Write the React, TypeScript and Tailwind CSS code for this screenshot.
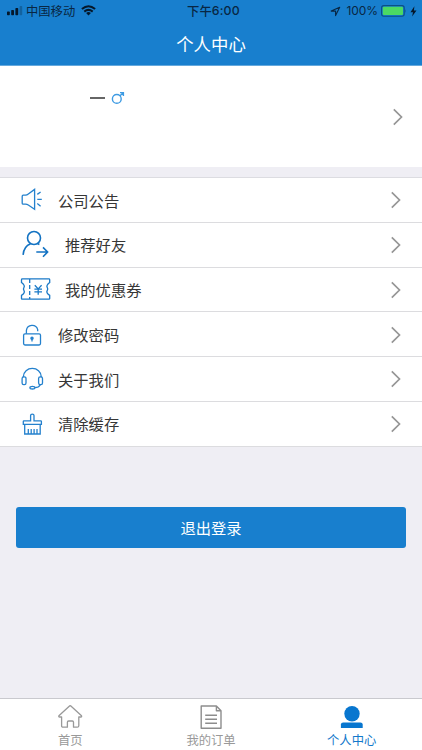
import type { ReactNode } from "react";

function Chevron() {
  return (
    <svg width="12" height="20" viewBox="0 0 12 20" fill="none" stroke="#969696" strokeWidth="1.7" className="shrink-0">
      <path d="M1.8 2.3 9.5 10 1.8 17.7" />
    </svg>
  );
}

function StatusBar() {
  return (
    <div className="grid h-[22px] grid-cols-[1fr_auto_1fr] items-center text-[12.3px] leading-none text-[#082744]">
      <div className="flex items-center pl-[7px]">
        <svg width="17" height="10" viewBox="0 0 17 10" fill="#05182b">
          <rect x="0" y="5.5" width="2.8" height="3.7" rx=".7" />
          <rect x="4.2" y="4" width="2.8" height="5.2" rx=".7" />
          <rect x="8.4" y="2" width="2.8" height="7.2" rx=".7" />
          <rect x="12.6" y="0" width="2.6" height="9.2" rx=".7" opacity=".28" />
        </svg>
        <span className="ml-[2px]">中国移动</span>
        <svg width="15" height="11" viewBox="0 0 15 11" fill="none" stroke="#05182b" strokeWidth="2" className="ml-[6px]">
          <path d="M.9 4.1Q7.5-1.7 14.1 4.1M3.3 6.6Q7.5 3.2 11.7 6.6" />
          <path d="M5.1 8Q7.5 6.2 9.9 8L7.5 10.6Z" fill="#05182b" stroke="none" />
        </svg>
      </div>
      <div className="flex items-center pl-[5px] font-medium">
        <span>下午</span>
        <span className="font-['Inter'] text-[12.3px] tracking-[0.2px]">6:00</span>
      </div>
      <div className="flex items-center justify-end pr-[5px]">
        <svg width="11" height="11" viewBox="0 0 11 11" fill="none" stroke="#082744" strokeWidth="1.1" strokeLinejoin="round">
          <path d="M9.7 1.2 1.2 5.1H5.6V9.6Z" />
        </svg>
        <span className="ml-[6px] font-['Inter'] text-[12px] tracking-[-0.1px]">100%</span>
        <svg width="26" height="12" viewBox="0 0 26 12" className="ml-[3px]">
          <rect x=".6" y=".6" width="22.6" height="10.6" rx="2.2" fill="none" stroke="#0b4f86" strokeWidth="1.1" />
          <rect x="1.8" y="1.8" width="20.2" height="8.2" rx="1" fill="#4bd964" />
          <path d="M24.3 4V8Q25.5 6 24.3 4Z" fill="#0b4f86" />
        </svg>
        <svg width="7" height="11" viewBox="0 0 7 11" fill="#05182b" className="ml-[3px]">
          <path d="M4.4.3.5 6.2H3L2.1 10.6 6.5 4.6H3.9Z" />
        </svg>
      </div>
    </div>
  );
}

const speaker = (
  <>
    <path d="M2.2 18.2Q2.2 17.2 3.2 17.2H5.5Q7 17 8.3 16L14.6 11.4V31.2L8.3 27Q7 26.2 5.5 26.2H3.2Q2.2 26.2 2.2 25.2Z" />
    <path d="M17.3 16.4 20.6 14M17.3 21.4H21.8M17.3 25.6 20.6 28.2" />
  </>
);

const friend = (
  <>
    <circle cx="14" cy="15" r="6.5" />
    <path d="M3.1 31.9C3.5 26.5 6 22.6 10.6 20.8M17.4 20.6 19.4 21.5M16.3 29H27.5M23 24.4 27.6 29 23 33.8" />
  </>
);

const coupon = (
  <>
    <path d="M2.3 10.9H28.9Q29.7 10.9 29.7 11.7V14.6C26.5 17 26.5 18.5 27.3 19.7Q28.2 21 27.3 22.3C26.5 23.5 26.5 25.2 29.7 27.4V30.4Q29.7 31.2 28.9 31.2H2.3Q1.5 31.2 1.5 30.4V27.4C4.7 25.2 4.7 23.5 3.9 22.3Q3 21 3.9 19.7C4.7 18.5 4.7 17 1.5 14.6V11.7Q1.5 10.9 2.3 10.9Z" />
    <path d="M9.7 11V31" strokeDasharray="4 2" />
    <path d="M14.8 17.2 18.2 20.9 21.6 17.2M18.2 20.9V26.8M14.4 21.1H22M14.4 23.9H22" />
  </>
);

const lock = (
  <>
    <rect x="3.6" y="20.8" width="16.9" height="11.2" rx="1.4" />
    <path d="M6.4 20.8V17.4A5.8 5.8 0 0 1 17.7 16.6V18.3" />
    <path d="M12 25V28.4" />
    <circle cx="12" cy="25.2" r="1.1" fill="#2481cd" />
  </>
);

const headset = (
  <>
    <path d="M3.4 20.2V19.5C3.6 14.8 7.4 11.4 12.3 11.4S21 14.8 21.2 19.5V20.2" />
    <rect x="2.1" y="19.8" width="3.9" height="7.9" rx="1.6" />
    <rect x="18.6" y="19.8" width="3.9" height="7.9" rx="1.6" />
    <path d="M20.3 27.7Q18.7 30.6 15 30.7" />
    <ellipse cx="12.4" cy="30.7" rx="2.5" ry="1.3" />
  </>
);

const brush = (
  <>
    <path d="M10.6 18.8V13.5Q10.6 12.2 12.3 12.2T14 13.5V18.8H20.8Q21.4 18.8 21.4 19.4V22.3H3.3V19.4Q3.3 18.8 3.9 18.8ZM4.7 22.3V32H20.2V22.3" />
    <path d="M8.3 27V32M11.2 27V32M14.1 27V32M17 27V32" />
  </>
);

interface MenuItem {
  label: string;
  icon: ReactNode;
  wide?: boolean;
  stroke: string;
}

const items: MenuItem[] = [
  { label: "公司公告", icon: speaker, stroke: "#2481cd" },
  { label: "推荐好友", icon: friend, wide: true, stroke: "#1272c2" },
  { label: "我的优惠券", icon: coupon, wide: true, stroke: "#1a79c7" },
  { label: "修改密码", icon: lock, stroke: "#2481cd" },
  { label: "关于我们", icon: headset, stroke: "#2481cd" },
  { label: "清除缓存", icon: brush, stroke: "#2481cd" },
];

function MenuRow({ item }: { item: MenuItem }) {
  return (
    <li className="flex h-[44.75px] items-center border-b border-[#dcdcdf] pt-[1px] pr-[20px] pl-[20px]">
      <svg
        width={item.wide ? 32 : 24}
        height="44"
        viewBox={item.wide ? "0 0 32 44" : "0 0 24 44"}
        fill="none"
        stroke={item.stroke}
        strokeWidth={item.label === "推荐好友" ? 1.6 : 1.3}
        className="shrink-0"
      >
        {item.icon}
      </svg>
      <span className={item.wide ? "ml-[13px] flex-1" : "ml-[14px] flex-1"}>{item.label}</span>
      <Chevron />
    </li>
  );
}

export default function App() {
  return (
    <div className="flex h-[750px] w-[422px] flex-col overflow-hidden bg-[#efeef4] font-['Noto_Sans_CJK_SC',sans-serif]">
      <header className="h-[66px] shrink-0 border-b border-[#65a9dd] bg-[#187fce]">
        <StatusBar />
        <h1 className="flex h-[43px] items-center justify-center text-[17.4px] leading-none font-normal text-white">个人中心</h1>
      </header>

      <section className="flex h-[101px] shrink-0 justify-between bg-white pr-[18px] pl-[90px]">
        <div className="flex h-[64px] items-center">
          <span className="h-[1.5px] w-[15px] bg-[#666]" />
          <svg width="14" height="14" viewBox="0 0 14 14" fill="none" stroke="#3e9be3" strokeWidth="1.4" className="ml-[6px]">
            <circle cx="5.8" cy="7.9" r="4.4" />
            <path d="M9 4.8 12.3 1.7M9 1.6H12.4V5" />
          </svg>
        </div>
        <div className="flex items-center">
          <Chevron />
        </div>
      </section>

      <ul className="mt-[10px] shrink-0 border-t border-[#dcdce1] bg-white text-[15.3px] leading-none text-[#363636]">
        {items.map((item) => (
          <MenuRow key={item.label} item={item} />
        ))}
      </ul>

      <div className="mt-[60.5px] px-4">
        <button className="flex h-[41px] w-full items-center justify-center rounded-[3px] bg-[#187fce] text-[15.3px] leading-none text-white">
          退出登录
        </button>
      </div>

      <nav className="mt-auto grid h-[52px] shrink-0 grid-cols-3 border-t border-[#c9c9ce] bg-white text-[12.3px] leading-none text-[#999]">
        <a className="flex flex-col items-center pt-[5px]">
          <svg width="26" height="26" viewBox="0 0 26 26" fill="none" stroke="#999" strokeWidth="1.3" strokeLinejoin="round">
            <path d="M12.8 1.8Q13.2 1.5 13.6 1.8L24.5 11.8Q25 12.9 23.8 13H21.8V21.7Q21.8 23.2 20.3 23.2H16.5V18.2Q16.5 17 15.3 17H11.6Q10.4 17 10.4 18.2V23.2H6.1Q4.6 23.2 4.6 21.7V13H2.6Q1.4 12.9 1.9 11.8Z" />
          </svg>
          <span className="mt-[4px]">首页</span>
        </a>
        <a className="flex flex-col items-center pt-[5px]">
          <svg width="24" height="26" viewBox="0 0 24 26" fill="none" stroke="#8d8d8d" strokeWidth="1.4" strokeLinejoin="round">
            <path d="M2.2 2H17.4L22 6.8V24.3H2.2ZM17.4 2V6.8H22M6.2 11.3H18M6.2 15.3H18M6.2 19.3H18" />
          </svg>
          <span className="mt-[4px]">我的订单</span>
        </a>
        <a className="flex flex-col items-center pt-[5px] text-[#1378cb]">
          <svg width="24" height="26" viewBox="0 0 24 26" fill="#0876cf">
            <circle cx="12" cy="9.8" r="7.7" />
            <path d="M3.2 18.4H20.4Q22.7 18.4 22.7 20.4V24H.9V20.4Q.9 18.4 3.2 18.4Z" />
          </svg>
          <span className="mt-[4px]">个人中心</span>
        </a>
      </nav>
    </div>
  );
}
